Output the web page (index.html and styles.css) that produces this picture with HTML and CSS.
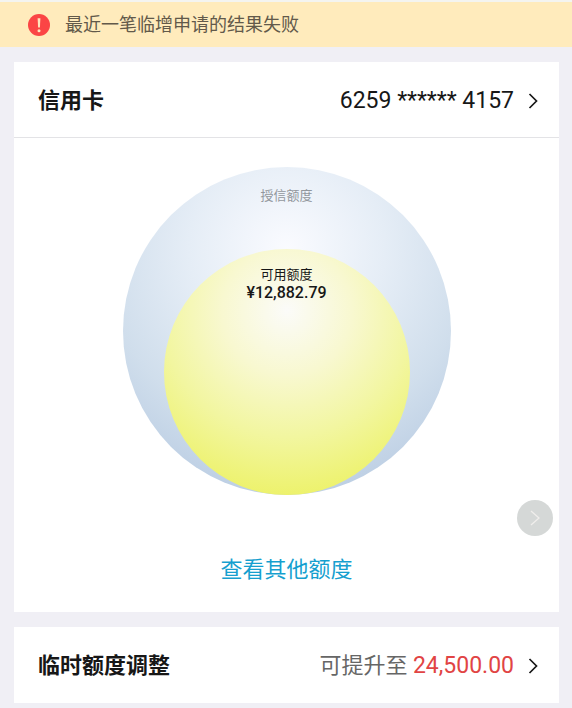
FILE: index.html
```html
<!DOCTYPE html>
<html lang="zh-CN">
<head>
    <meta charset="utf-8">
    <meta name="viewport" content="width=device-width, initial-scale=1">
    <title>信用卡</title>
    <link rel="stylesheet" href="styles.css">
</head>
<body>

<div class="notice" role="status">
    <svg class="notice-icon" viewBox="0 0 22 22" aria-hidden="true">
        <circle cx="11" cy="11" r="11" fill="#fb4545"/>
        <path d="M9.6 4.2h2.8l-.5 9.3h-1.8z" fill="#ffe3bd"/>
        <circle cx="11" cy="16.8" r="1.5" fill="#ffe3bd"/>
    </svg>
    <span>最近一笔临增申请的结果失败</span>
</div>

<main>
    <section class="card">
        <a href="#card" class="row row-line">
            <span class="title">信用卡</span>
            <span class="value number">6259 ****** 4157</span>
            <svg class="arrow" viewBox="0 0 10 16" aria-hidden="true"><path d="M1.5 1l7 7-7 7"/></svg>
        </a>
        <div class="limits">
            <div class="circle-total">
                <span class="total-label">授信额度</span>
                <div class="circle-free">
                    <span>可用额度</span>
                    <strong>¥12,882.79</strong>
                </div>
            </div>
            <a href="#other" class="more">查看其他额度</a>
        </div>
        <button class="floater" type="button" aria-label="展开">
            <svg viewBox="0 0 10 16" aria-hidden="true"><path d="M1 1l8 7-8 7"/></svg>
        </button>
    </section>

    <section class="card">
        <a href="#adjust" class="row">
            <span class="title">临时额度调整</span>
            <span class="value">可提升至 <span class="number amount">24,500.00</span></span>
            <svg class="arrow" viewBox="0 0 10 16" aria-hidden="true"><path d="M1.5 1l7 7-7 7"/></svg>
        </a>
    </section>
</main>

</body>
</html>
```

FILE: styles.css
```css
* {
    box-sizing: border-box;
}

body {
    margin: 0;
    background: #f0eff5;
    color: #171717;
    font-family: Roboto, "Noto Sans CJK SC", sans-serif;
    font-size: 22px;
    line-height: 32px;
}

a {
    color: inherit;
    text-decoration: none;
}

.notice {
    display: flex;
    align-items: center;
    gap: 15px;
    height: 47px;
    padding-left: 28px;
    border-top: solid 2px #f4f4f0;
    background: #ffebbc;
    color: #62594a;
    font-size: 18px;
}

.notice-icon {
    width: 22px;
    height: 22px;
}

main {
    display: flex;
    flex-direction: column;
    gap: 15px;
    padding: 15px 13px 5px 14px;
}

.card {
    position: relative;
    background: #ffffff;
}

.row {
    display: flex;
    align-items: center;
    height: 76px;
    padding: 2px 21px 0 24px;
}

.row-line {
    border-bottom: solid 1px #e3e3e6;
}

.title {
    font-weight: 700;
    flex: 1;
}

.value {
    color: #666666;
}

.number {
    color: #171717;
    font-size: 23px;
}

.amount {
    color: #e14444;
}

.arrow {
    width: 10px;
    height: 16px;
    margin-left: 14px;
    fill: none;
    stroke: #171717;
    stroke-width: 1.7;
}

.limits {
    display: flex;
    flex-direction: column;
    align-items: center;
    padding: 29px 0 26px;
}

.circle-total,
.circle-free {
    display: flex;
    flex-direction: column;
    align-items: center;
    border-radius: 50%;
    font-size: 13px;
    line-height: 18px;
}

.circle-total {
    justify-content: space-between;
    width: 328px;
    height: 328px;
    padding-top: 20px;
    background: radial-gradient(circle 246px at 50% 25%, #fafbff, #e5edf6 40%, #d0deec 75%, #bdcfe4);
}

.total-label {
    color: #92979d;
}

.circle-free {
    width: 246px;
    height: 246px;
    padding-top: 17px;
    background: radial-gradient(circle 185px at 50% 25%, #fbfbf9, #f8f8d0 35%, #f2f6a0 68%, #edf26c);
}

.circle-free strong {
    font-size: 16px;
    font-weight: 500;
}

.more {
    margin-top: 59px;
    color: #169fcf;
}

/* floats above the page near the right edge */
.floater {
    position: absolute;
    right: 6px;
    bottom: 76px;
    display: flex;
    align-items: center;
    justify-content: center;
    width: 36px;
    height: 36px;
    padding: 0;
    border: none;
    border-radius: 50%;
    background: #d5d8d7;
}

.floater svg {
    width: 10px;
    height: 16px;
    fill: none;
    stroke: #f0eeec;
    stroke-width: 1.3;
}
```
